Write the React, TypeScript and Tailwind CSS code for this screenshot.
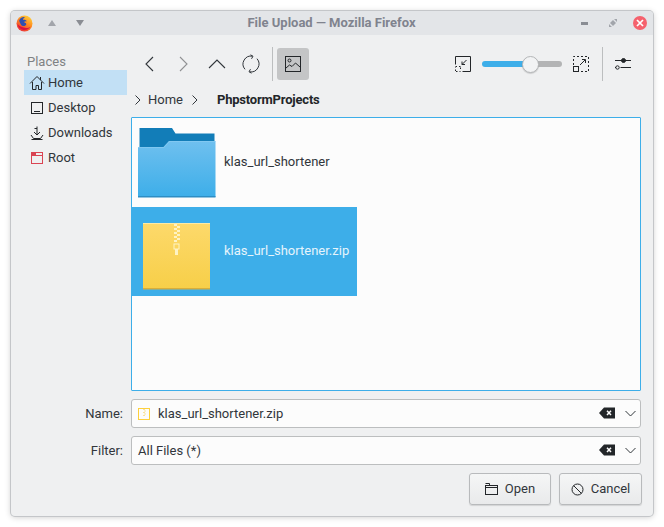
import React from "react";

const Chevron = ({ d, cls = "#31363b", w = 20, h = 20 }: { d: string; cls?: string; w?: number; h?: number }) => (
  <svg width={w} height={h} viewBox={`0 0 ${w} ${h}`} fill="none" stroke={cls} strokeWidth="1.1">
    <path d={d} />
  </svg>
);

const Firefox = () => (
  <svg width="17" height="17" viewBox="0 0 17 17">
    <defs>
      <linearGradient id="ff" x1="0.8" y1="0" x2="0.2" y2="1">
        <stop offset="0" stopColor="#ffd53a" />
        <stop offset="0.45" stopColor="#ff8a1f" />
        <stop offset="1" stopColor="#e8263c" />
      </linearGradient>
    </defs>
    <circle cx="8.5" cy="8.5" r="8" fill="url(#ff)" />
    <path d="M3.2 5.2C4.5 2.6 7 1.6 9 2.2 7.6 3 7 3.8 6.9 4.8c1.5-.5 3.4.1 4 1.5-1-.3-2.4 0-3 .8.5.6 1.7.7 2.2 1.4.5.9-.3 2.2-1.6 2.5-1.4.3-3-.4-3.6-1.6C4.2 8.3 3.3 6.8 3.2 5.2Z" fill="#2f4fb0" />
    <path d="M1.5 9c.6 3.6 3.6 6 7 6 2.8 0 5-1.5 6-3.6-1.3 1.4-3.6 2-5.6 1.4C6 12 3 11.3 1.5 9Z" fill="#d8133f" />
  </svg>
);

const Home = () => (
  <svg width="16" height="16" viewBox="0 0 16 16" fill="none" stroke="#232629" strokeWidth="1">
    <path d="M1 8.5 8 1.5l7 7" />
    <path d="M3.5 7v7.5h3.5v-4h2.5v4h3V7" />
    <path d="M11.5 2v3" />
  </svg>
);
const Desktop = () => (
  <svg width="16" height="16" viewBox="0 0 16 16" fill="none" stroke="#232629" strokeWidth="1">
    <rect x="2.5" y="2.5" width="11" height="11" />
    <path d="M5 11.5h6" />
  </svg>
);
const Downloads = () => (
  <svg width="16" height="16" viewBox="0 0 16 16" fill="none" stroke="#232629" strokeWidth="1">
    <path d="M8 1.5v8M5 7l3 3 3-3" />
    <path d="M5.5 3.5H8" />
    <path d="M2 10l2.5 3.5h7L14 10" />
    <path d="M2.5 14.5h11" />
  </svg>
);
const Root = () => (
  <svg width="16" height="16" viewBox="0 0 16 16" fill="none" stroke="#da4453" strokeWidth="1">
    <rect x="2.5" y="2.5" width="11" height="11" />
    <path d="M2.5 5.500h11" />
    <path d="M2.5 2.5h4v3h-4Z" fill="#da4453" />
  </svg>
);

const Place = ({ icon, label, active }: { icon: React.ReactNode; label: string; active?: boolean }) => (
  <div className={`flex h-[25px] items-center pl-[5px] gap-[3px] ${active ? "bg-[#c2e0f5]" : ""}`}>
    {icon}
    <span>{label}</span>
  </div>
);

const Folder = () => (
  <svg width="78" height="70" viewBox="0 0 78 70" className="ml-[6px]">
    <defs>
      <linearGradient id="fo" x1="0" y1="0" x2="0" y2="1">
        <stop offset="0" stopColor="#6fc0ef" />
        <stop offset="1" stopColor="#3daee9" />
      </linearGradient>
    </defs>
    <path d="M1.5 0H34l3.5 5.5H76.5V20H1.5Z" fill="#127db8" />
    <path d="M0 19H25.5L31 13H77.5V69H0Z" fill="url(#fo)" />
    <path d="M0 19H25.5L31 13H77.5V14H31.500L26 20H0Z" fill="#8dcdf2" opacity="0.6" />
    <rect x="0" y="68" width="77.500" height="1.500" fill="#2d8dc4" />
  </svg>
);

const Zip = () => (
  <svg width="67" height="67" viewBox="0 0 67 67" className="ml-[11px] mt-[16px] self-start">
    <defs>
      <linearGradient id="zi" x1="0" y1="0" x2="0" y2="1">
        <stop offset="0" stopColor="#fdd96b" />
        <stop offset="1" stopColor="#f7cf48" />
      </linearGradient>
    </defs>
    <rect width="67" height="66" fill="url(#zi)" />
    <rect width="67" height="1" fill="#fdeaa6" />
    <rect y="65" width="67" height="1.500" fill="#d9ae3a" />
    <g fill="#fef3c4">
      <rect x="31" y="1" width="3" height="2" />
      <rect x="34" y="3" width="3" height="2" />
      <rect x="31" y="5" width="3" height="2" />
      <rect x="34" y="7" width="3" height="2" />
      <rect x="31" y="9" width="3" height="2" />
      <rect x="34" y="11" width="3" height="2" />
      <rect x="31" y="13" width="3" height="2" />
      <rect x="34" y="15" width="3" height="2" />
      <rect x="31" y="17" width="3" height="2" />
      <rect x="32" y="26" width="3" height="6" />
    </g>
    <rect x="31" y="21" width="5" height="5" fill="none" stroke="#fef3c4" strokeWidth="1" />
  </svg>
);

const MiniZip = () => (
  <svg width="12" height="12" viewBox="0 0 12 12" fill="none">
    <rect x="0.5" y="0.5" width="11" height="11" stroke="#fdd03c" />
    <path d="M5.500 1.500h1M6.500 3h1M5.500 4.500h1M6.500 6h1M5.500 7.500h1" stroke="#f7c93a" />
  </svg>
);

const ClearDrop = () => (
  <div className="flex items-center gap-[10px] pr-[4px] pb-[1px]">
    <svg width="16" height="12" viewBox="0 0 16 12">
      <path d="M5 0.500H16V11.500H5L0 6Z" fill="#232629" />
      <path d="M8 3.800 12 8M12 3.800 8 8" stroke="#fcfcfc" strokeWidth="1.500" />
    </svg>
    <svg width="11" height="7" viewBox="0 0 11 7" fill="none" stroke="#31363b" strokeWidth="1">
      <path d="M0.500 1 5.500 6l5-5" />
    </svg>
  </div>
);

const Field = ({ label, children }: { label: string; children: React.ReactNode }) => (
  <div className="flex items-center">
    <span className="w-[112px] text-right pr-[8px] text-[#31363b]">{label}</span>
    <div className="flex h-[29px] w-[510px] items-center justify-between rounded-[3px] border border-[#bcbebf] bg-[#fcfcfc] pl-[6px]">
      <div className="flex items-center gap-[8px]">{children}</div>
      <ClearDrop />
    </div>
  </div>
);

const Btn = ({ w, icon, label }: { w: string; icon: React.ReactNode; label: string }) => (
  <button className={`flex h-[32px] ${w} items-center justify-center gap-[7px] rounded-[3px] border border-[#b8babc] bg-gradient-to-b from-[#f5f6f6] to-[#e9eaeb] shadow-[0_1px_1px_rgba(0,0,0,0.12)] text-[#31363b]`}>
    {icon}
    <span>{label}</span>
  </button>
);

export default function App() {
  return (
    <div className="h-[527px] w-[664px] overflow-hidden bg-white pl-[11px] pt-[11px] font-['Roboto',sans-serif] text-[13px] text-[#31363b]">
      <div className="flex h-[505px] w-[642px] flex-col rounded-[4px] bg-[#eff0f1] shadow-[0_0_0_1px_#c4c6c9,0_1px_6px_rgba(0,0,0,0.22)]">
        {/* title bar */}
        <div className="grid h-[24px] shrink-0 grid-cols-[1fr_auto_1fr] items-center rounded-t-[4px] bg-[#e3e5e8] pl-[5px] pr-[6px]">
          <div className="flex items-center">
            <Firefox />
            <svg width="8" height="6" viewBox="0 0 8 6" className="ml-[15px]"><path d="M4 0 8 6H0Z" fill="#a2a5ab" /></svg>
            <svg width="8" height="6" viewBox="0 0 8 6" className="ml-[20px]"><path d="M0 0H8L4 6Z" fill="#8a8d94" /></svg>
          </div>
          <span className="text-[13px] font-bold text-[#80838e]">File Upload — Mozilla Firefox</span>
          <div className="flex items-center justify-end">
            <div className="h-[3px] w-[7px] bg-[#8a8d94]" />
            <svg width="8" height="8" viewBox="0 0 8 8" className="ml-[21px]"><path d="M5 0H8V3ZM0 8V5L3 8Z" fill="#a2a5ab" /><path d="M1 4 4 1 7 4 4 7Z" fill="#a2a5ab" /></svg>
            <div className="ml-[16px] flex h-[14px] w-[14px] items-center justify-center rounded-full bg-[#f5616d]">
              <svg width="8" height="8" viewBox="0 0 8 8" stroke="#fff" strokeWidth="1.700"><path d="M1 1 7 7M7 1 1 7" /></svg>
            </div>
          </div>
        </div>

        {/* upper area */}
        <div className="flex shrink-0 pl-[13px]">
          <div className="w-[103px] shrink-0 pt-[18px]">
            <div className="h-[17px] pl-[3px] leading-[17px] text-[#7f8284]">Places</div>
            <Place icon={<Home />} label="Home" active />
            <Place icon={<Desktop />} label="Desktop" />
            <Place icon={<Downloads />} label="Downloads" />
            <Place icon={<Root />} label="Root" />
          </div>
          <div className="ml-[4px] w-[510px] pt-[12px]">
            {/* toolbar */}
            <div className="flex h-[34px] items-center">
              <div className="flex w-[136px] items-center pl-[8px]">
                <Chevron d="M14 3 7 10l7 7" />
                <div className="ml-[14px]"><Chevron d="M7 3l7 7-7 7" cls="#8f9193" /></div>
                <div className="ml-[14px]"><Chevron d="M2 14l8-8 8 8" /></div>
                <div className="ml-[14px]">
                  <svg width="20" height="20" viewBox="0 0 20 20" fill="none" stroke="#31363b" strokeWidth="1">
                    <path d="M4 15.300A8 8 0 0 1 11.500 2.200" />
                    <path d="M16 4.700A8 8 0 0 1 8.500 17.800" />
                    <path d="M9.500 0.800 12 2.300 10.500 4.800M10.500 19.200 8 17.700 9.500 15.200" />
                  </svg>
                </div>
              </div>
              <div className="ml-[5px] h-[34px] w-px bg-[#bcbebf]" />
              <div className="ml-[4px] flex h-[32px] w-[32px] items-center justify-center rounded-[3px] bg-[#c4c5c6]">
                <svg width="16" height="16" viewBox="0 0 16 16" fill="none" stroke="#232629" strokeWidth="1">
                  <rect x="0.500" y="0.500" width="15" height="15" />
                  <circle cx="4.500" cy="4.500" r="1.500" />
                  <path d="M1 12l3.500-3 2.500 1.500L10.500 7l4.500 4" />
                </svg>
              </div>
              <div className="ml-auto flex items-center">
                <svg width="16" height="16" viewBox="0 0 16 16" fill="none" stroke="#232629" strokeWidth="1">
                  <path d="M0.500 8.500V0.500H15.500V15.500H7.500" />
                  <path d="M0.500 10.500v1M0.500 13.500v2h2M4.500 15.500h1M5.500 13v-2.500h-2M1 10.500h1" strokeDasharray="1.500 1" />
                  <path d="M11.500 4 7 8.500M7 5.500v3h3" />
                </svg>
                <div className="relative ml-[11px] flex w-[80px] items-center">
                  <div className="h-[6px] w-[42px] rounded-l-full bg-[#3daee9]" />
                  <div className="h-[6px] flex-1 rounded-r-full bg-[#b3b4b5]" />
                  <div className="absolute left-[40px] top-[-5.500px] h-[17px] w-[17px] rounded-full border border-[#b4b6b8] bg-[#f2f3f4] shadow-[0_1px_1px_rgba(0,0,0,0.15)]" />
                </div>
                <svg width="16" height="16" viewBox="0 0 16 16" fill="none" stroke="#232629" strokeWidth="1" className="ml-[11px]">
                  <path d="M0.500 9V0.500H15.500V15.500H7.500" strokeDasharray="2 2" />
                  <rect x="0.500" y="10.500" width="5" height="5" />
                  <path d="M7 9l5-5M9 3.500h3.500V7" />
                </svg>
                <div className="ml-[13px] h-[34px] w-px bg-[#bcbebf]" />
                <svg width="16" height="14" viewBox="0 0 16 14" fill="none" stroke="#232629" strokeWidth="1" className="ml-[12px] mr-[10px]">
                  <path d="M0 3.500h16M0 10.500h1M5.500 10.500H16" />
                  <circle cx="8.500" cy="3.500" r="2" fill="#232629" />
                  <circle cx="2.500" cy="10.500" r="1.700" />
                </svg>
              </div>
            </div>
            {/* breadcrumb */}
            <div className="flex h-[24px] mt-[7px] items-center pl-[4px]">
              <svg width="6" height="10" viewBox="0 0 6 10" fill="none" stroke="#31363b"><path d="M0.500 0.500 5 5 .5 9.500" /></svg>
              <span className="ml-[7px]">Home</span>
              <svg width="6" height="10" viewBox="0 0 6 10" fill="none" stroke="#31363b" className="ml-[9px]"><path d="M0.500 0.500 5 5 .5 9.500" /></svg>
              <span className="ml-[19px] font-bold text-[#232629] tracking-[-0.2px]">PhpstormProjects</span>
            </div>
            {/* file list */}
            <div className="mt-[5px] h-[274px] rounded-[1px] border border-[#3daee9] bg-[#fcfcfc]">
              <div className="flex h-[89px] w-[225px] items-center">
                <Folder />
                <span className="ml-[8px] pb-[2px] text-[#31363b]">klas_url_shortener</span>
              </div>
              <div className="flex h-[89px] w-[225px] items-center bg-[#3daee9]">
                <Zip />
                <span className="ml-[14px] pb-[2px] text-[#e6f4fc]">klas_url_shortener.zip</span>
              </div>
            </div>
          </div>
        </div>

        {/* bottom form */}
        <div className="flex flex-col gap-[8px] pl-[8px] pt-[8px]">
          <Field label="Name:">
            <MiniZip />
            <span>klas_url_shortener.zip</span>
          </Field>
          <Field label="Filter:">
            <span>All Files (*)</span>
          </Field>
        </div>
        <div className="flex justify-end gap-[8px] pr-[11px] pt-[8px]">
          <Btn
            w="w-[82px]"
            label="Open"
            icon={
              <svg width="13" height="12" viewBox="0 0 13 12" fill="none" stroke="#232629">
                <rect x="0.500" y="2.500" width="12" height="9" />
                <path d="M0.500 4.500h12M0.500 .5h4v2" />
              </svg>
            }
          />
          <Btn
            w="w-[83px]"
            label="Cancel"
            icon={
              <svg width="13" height="13" viewBox="0 0 13 13" fill="none" stroke="#232629">
                <circle cx="6.500" cy="6.500" r="5.500" />
                <path d="M2.500 2.500l8 8" />
              </svg>
            }
          />
        </div>
      </div>
    </div>
  );
}
